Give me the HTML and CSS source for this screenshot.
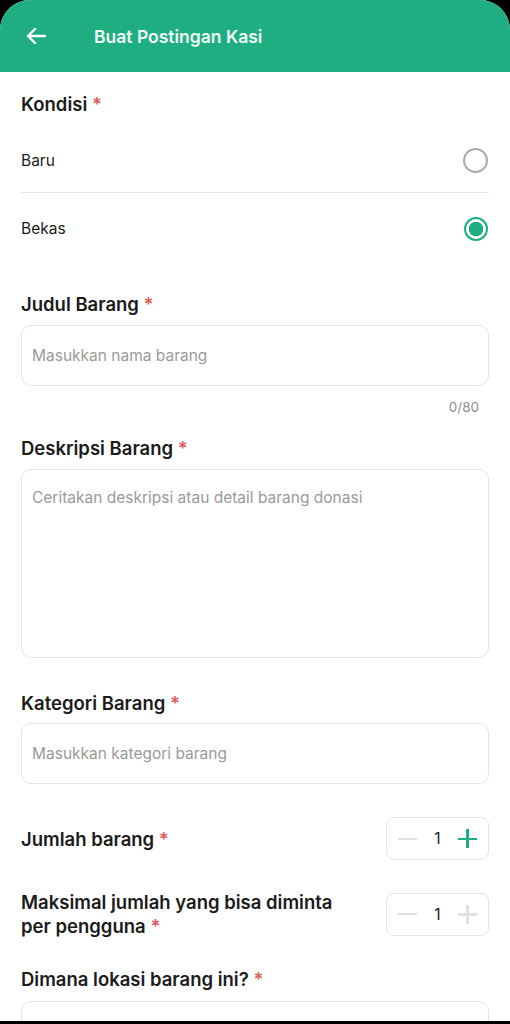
FILE: index.html
```html
<!DOCTYPE html>
<html>
    <head>
        <title>Buat Postingan Kasi</title>
        <link rel="stylesheet" href="styles.css">
    </head>
    <body>
        <div class="screen">
            <div class="app-bar">
                <svg class="back" width="24" height="24" viewBox="0 0 24 24">
                    <path d="M21 12H4M11 5l-7 7 7 7" fill="none" stroke="#fff" stroke-width="2.4" stroke-linecap="round" stroke-linejoin="round"/>
                </svg>
                <h1>Buat Postingan Kasi</h1>
            </div>
            <div class="form">
                <div class="label">Kondisi <span class="req">*</span></div>
                <div class="radio-row">
                    <span>Baru</span>
                    <span class="radio"></span>
                </div>
                <div class="radio-row">
                    <span>Bekas</span>
                    <span class="radio checked"></span>
                </div>

                <div class="label label-judul">Judul Barang <span class="req">*</span></div>
                <div class="field">Masukkan nama barang</div>
                <div class="counter">0/80</div>

                <div class="label">Deskripsi Barang <span class="req">*</span></div>
                <div class="field area">Ceritakan deskripsi atau detail barang donasi</div>

                <div class="label label-gap">Kategori Barang <span class="req">*</span></div>
                <div class="field">Masukkan kategori barang</div>

                <div class="qty-row first">
                    <div class="label">Jumlah barang <span class="req">*</span></div>
                    <div class="stepper">
                        <span class="minus"></span>
                        <span class="num">1</span>
                        <span class="plus"></span>
                    </div>
                </div>
                <div class="qty-row">
                    <div class="label multi">Maksimal jumlah yang bisa diminta<br>per pengguna <span class="req">*</span></div>
                    <div class="stepper">
                        <span class="minus"></span>
                        <span class="num">1</span>
                        <span class="plus off"></span>
                    </div>
                </div>

                <div class="label label-lokasi">Dimana lokasi barang ini? <span class="req">*</span></div>
                <div class="field loc"><span class="pin"></span></div>
            </div>
        </div>
    </body>
</html>
```

FILE: styles.css
```css
body {
    margin: 0;
    padding: 0;
    background: #000;
    font-family: Inter, "Noto Sans", sans-serif;
    color: #1b1b1b;
}
.screen {
    height: 1021px;
    overflow: hidden;
    background: #fff;
    border-radius: 30px 30px 0 0;
}
.app-bar {
    height: 72px;
    background: #1fae82;
    display: flex;
    align-items: center;
    padding-left: 24px;
}
.app-bar .back {
    margin-right: 46px;
}
.app-bar h1 {
    margin: 0;
    font-size: 17.5px;
    font-weight: 600;
    color: #f2fbf7;
}
.form {
    padding: 19px 21px 0 21px;
}
.label {
    font-size: 18.5px;
    font-weight: 600;
    line-height: 26px;
    color: #1b1b1b;
}
.req {
    color: #e0595b;
}
.radio-row {
    display: flex;
    justify-content: space-between;
    align-items: center;
    margin-top: 11px;
    height: 64px;
    font-size: 15.5px;
    padding-right: 1px;
}
.radio-row + .radio-row {
    margin-top: 0;
    height: 72px;
    border-top: 1px solid #e6e6e6;
    box-sizing: border-box;
}
.radio {
    width: 21px;
    height: 21px;
    border: 2px solid #aaa;
    border-radius: 50%;
}
.radio.checked {
    width: 20px;
    height: 20px;
    border: 2.5px solid #1fae82;
    background: radial-gradient(circle, #1fae82 0 7px, #fff 7.5px);
}
.label-judul {
    margin-top: 27px;
}
.field {
    margin-top: 8px;
    border: 1px solid #e4e4e4;
    border-radius: 10px;
    height: 61px;
    box-sizing: border-box;
    padding: 0 10px;
    display: flex;
    align-items: center;
    font-size: 15.5px;
    color: #9a9a9a;
}
.field.area {
    height: 189px;
    align-items: flex-start;
    padding-top: 18px;
}
.counter {
    text-align: right;
    font-size: 13.5px;
    line-height: 16px;
    color: #8d8d8d;
    margin: 13px 10px 20px 0;
}
.label-gap {
    margin-top: 32px;
}
.label-gap + .field {
    margin-top: 7px;
}
.qty-row {
    display: flex;
    justify-content: space-between;
    align-items: center;
    margin-top: 30px;
}
.qty-row.first {
    margin-top: 33px;
}
.qty-row .label {
    width: 325px;
}
.qty-row .label.multi {
    line-height: 24px;
}
.stepper {
    width: 103px;
    height: 43px;
    border: 1px solid #e4e4e4;
    border-radius: 8px;
    display: flex;
    align-items: center;
    justify-content: space-between;
    padding: 0 11px;
    box-sizing: border-box;
}
.num {
    font-size: 15.5px;
    color: #1b1b1b;
}
.minus, .plus {
    position: relative;
    width: 19px;
    height: 19px;
}
.minus::before, .plus::before, .plus::after {
    content: "";
    position: absolute;
    background: #e0e0e0;
    left: 0;
    top: 8.5px;
    width: 19px;
    height: 2px;
}
.plus::before, .plus::after {
    background: #1fae82;
    height: 2.5px;
}
.plus::after {
    left: 8.25px;
    top: 0;
    width: 2.5px;
    height: 19px;
}
.plus.off::before, .plus.off::after {
    background: #e0e0e0;
}
.label-lokasi {
    margin-top: 28px;
}
.field.loc {
    margin-top: 9px;
}
.pin {
    width: 14px;
    height: 14px;
    border-radius: 50%;
    background: #333;
    margin: 38px 0 0 11px;
}
```
